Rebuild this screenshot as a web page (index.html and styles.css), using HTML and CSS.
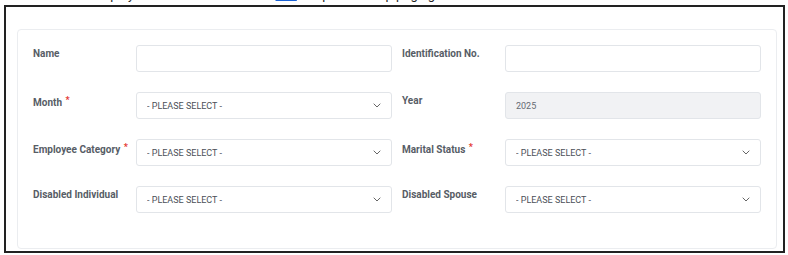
FILE: index.html
```html
<!DOCTYPE html>
<html lang="en">
<head>
  <meta charset="UTF-8" />
  <meta name="viewport" content="width=device-width, initial-scale=1.0"/>
  <title>Employee Details</title>
  <link rel="stylesheet" href="styles.css">
</head>
<body>
  <div class="top-note">
    <p>Fill in the employee details below or click <a href="#">this</a> to open the help page guide.</p>
  </div>

  <div class="frame">
    <div class="card">
      <form class="fields">
        <div class="field">
          <label for="name">Name</label>
          <input type="text" id="name">
        </div>
        <div class="field">
          <label for="ic">Identification No.</label>
          <input type="text" id="ic">
        </div>

        <div class="field">
          <label for="month">Month <span class="req">*</span></label>
          <div class="select-box">
            <select id="month">
              <option>- PLEASE SELECT -</option>
            </select>
            <svg class="chevron" viewBox="0 0 8 5" width="8" height="5"><path d="M0.7 0.7l3.3 3.3 3.3-3.3" fill="none" stroke="#666" stroke-width="1"/></svg>
          </div>
        </div>
        <div class="field">
          <label for="year">Year</label>
          <input type="text" id="year" value="2025" disabled>
        </div>

        <div class="field">
          <label for="category">Employee Category <span class="req">*</span></label>
          <div class="select-box">
            <select id="category">
              <option>- PLEASE SELECT -</option>
            </select>
            <svg class="chevron" viewBox="0 0 8 5" width="8" height="5"><path d="M0.7 0.7l3.3 3.3 3.3-3.3" fill="none" stroke="#666" stroke-width="1"/></svg>
          </div>
        </div>
        <div class="field">
          <label for="marital">Marital Status <span class="req">*</span></label>
          <div class="select-box">
            <select id="marital">
              <option>- PLEASE SELECT -</option>
            </select>
            <svg class="chevron" viewBox="0 0 8 5" width="8" height="5"><path d="M0.7 0.7l3.3 3.3 3.3-3.3" fill="none" stroke="#666" stroke-width="1"/></svg>
          </div>
        </div>

        <div class="field">
          <label for="disabled">Disabled Individual</label>
          <div class="select-box">
            <select id="disabled">
              <option>- PLEASE SELECT -</option>
            </select>
            <svg class="chevron" viewBox="0 0 8 5" width="8" height="5"><path d="M0.7 0.7l3.3 3.3 3.3-3.3" fill="none" stroke="#666" stroke-width="1"/></svg>
          </div>
        </div>
        <div class="field">
          <label for="spouse">Disabled Spouse</label>
          <div class="select-box">
            <select id="spouse">
              <option>- PLEASE SELECT -</option>
            </select>
            <svg class="chevron" viewBox="0 0 8 5" width="8" height="5"><path d="M0.7 0.7l3.3 3.3 3.3-3.3" fill="none" stroke="#666" stroke-width="1"/></svg>
          </div>
        </div>
      </form>
    </div>
  </div>
</body>
</html>
```

FILE: styles.css
```css
body {
  margin: 0;
  padding: 0;
  background-color: white;
  font-family: Roboto, "Liberation Sans", sans-serif;
}

.top-note {
  height: 4px;
  overflow: hidden;
  position: relative;
}

.top-note p {
  position: absolute;
  top: -12px;
  left: 37px;
  margin: 0;
  font-size: 13px;
  line-height: 13px;
  color: #222;
  white-space: nowrap;
}

.top-note a {
  color: #1a62d6;
}

.frame {
  margin: 1px 3px 3px 4px;
  border: 2px solid #222;
  padding: 22px 6px 2px 11px;
}

.card {
  border: 1px solid #ebedf0;
  border-radius: 4px;
  padding: 15px 15px 35px 15px;
}

.fields {
  display: grid;
  grid-template-columns: 1fr 1fr;
  column-gap: 10px;
  row-gap: 20px;
}

.field {
  display: flex;
  align-items: flex-start;
}

.field label {
  width: 103px;
  flex-shrink: 0;
  padding-top: 3px;
  font-size: 10px;
  font-weight: 700;
  color: #575d66;
}

.req {
  color: #e3342f;
  font-size: 9px;
  vertical-align: 3px;
  margin-left: 1px;
}

input[type="text"],
select {
  box-sizing: border-box;
  width: 100%;
  height: 27px;
  margin: 0;
  padding: 0 10px;
  border: 1px solid #e2e5e9;
  border-radius: 3px;
  background-color: white;
  font-family: Roboto, "Liberation Sans", sans-serif;
  font-size: 9px;
  color: #4a4f57;
  outline: none;
}

input[disabled] {
  background-color: #f1f2f4;
  color: #666b73;
}

.select-box {
  position: relative;
  flex: 1;
}

select {
  appearance: none;
  -webkit-appearance: none;
}

.chevron {
  position: absolute;
  right: 11px;
  top: 11px;
  pointer-events: none;
}
```
